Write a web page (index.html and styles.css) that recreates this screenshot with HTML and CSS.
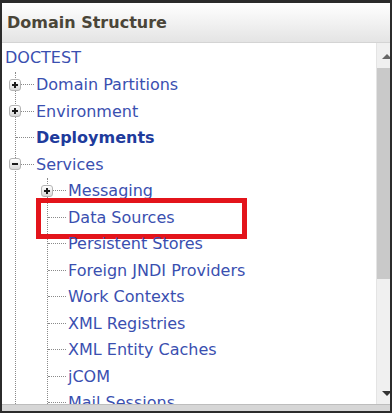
FILE: index.html
```html
<!DOCTYPE html>
<html lang="en">
<head>
  <meta charset="UTF-8" />
  <title>Domain Structure</title>
  <link rel="stylesheet" href="styles.css">
</head>
<body>

  <div class="panel">
    <div class="panel-header">Domain Structure</div>

    <div class="panel-body">
      <div class="tree">
        <div class="root">DOCTEST</div>
        <ul class="branch">
          <li>
            <div class="node"><span class="toggle plus"></span><span class="twig short"></span><a>Domain Partitions</a></div>
          </li>
          <li>
            <div class="node"><span class="toggle plus"></span><span class="twig short"></span><a>Environment</a></div>
          </li>
          <li>
            <div class="node"><span class="twig"></span><a class="strong">Deployments</a></div>
          </li>
          <li>
            <div class="node"><span class="toggle minus"></span><span class="twig short"></span><a>Services</a></div>
            <ul class="branch sub">
              <li>
                <div class="node"><span class="toggle plus"></span><span class="twig short"></span><a>Messaging</a></div>
              </li>
              <li>
                <div class="node marked"><span class="twig"></span><a>Data Sources</a></div>
              </li>
              <li><div class="node"><span class="twig"></span><a>Persistent Stores</a></div></li>
              <li><div class="node"><span class="twig"></span><a>Foreign JNDI Providers</a></div></li>
              <li><div class="node"><span class="twig"></span><a>Work Contexts</a></div></li>
              <li><div class="node"><span class="twig"></span><a>XML Registries</a></div></li>
              <li><div class="node"><span class="twig"></span><a>XML Entity Caches</a></div></li>
              <li><div class="node"><span class="twig"></span><a>jCOM</a></div></li>
              <li><div class="node"><span class="twig"></span><a>Mail Sessions</a></div></li>
            </ul>
          </li>
        </ul>
      </div>

      <div class="scrollbar">
        <div class="arrow up"></div>
        <div class="thumb"></div>
        <div class="track"></div>
        <div class="arrow down"></div>
      </div>
    </div>

    <div class="hbar"></div>
  </div>

</body>
</html>
```

FILE: styles.css
```css
body {
  margin: 0;
  background: #fff;
  font-family: 'DejaVu Sans', Tahoma, sans-serif;
}

.panel {
  width: 388px;
  height: 408px;
  border: 2px solid #2b2b2b;
  border-top-width: 3px;
  display: flex;
  flex-direction: column;
  overflow: hidden;
}

.panel-header {
  height: 39px;
  line-height: 39px;
  padding-left: 5px;
  font-size: 16px;
  font-weight: bold;
  color: #4a4538;
  background: linear-gradient(to bottom, #ffffff, #e4e4e4);
  border-bottom: 1px solid #d4d4d4;
  flex-shrink: 0;
}

.panel-body {
  flex: 1;
  display: flex;
  min-height: 0;
}

.tree {
  flex: 1;
  overflow: hidden;
  padding-top: 2px;
  font-size: 16px;
  color: #3a4fb0;
}

.root {
  height: 26.5px;
  line-height: 26.5px;
  padding-left: 3px;
}

.tree ul {
  list-style: none;
  margin: 0;
  padding: 0;
}

.tree .branch {
  margin-left: 13px;
  border-left: 1px dotted #8a8a8a;
}

.tree .branch.sub {
  margin-left: 31px;
}

.node {
  height: 26.5px;
  display: flex;
  align-items: center;
  position: relative;
}

.twig {
  width: 18px;
  flex-shrink: 0;
  border-top: 1px dotted #8a8a8a;
  margin-right: 2px;
}

.twig.short {
  width: 13px;
}

.toggle {
  width: 10px;
  height: 10px;
  flex-shrink: 0;
  margin-left: -7px;
  border: 1px solid #b4b4b4;
  border-radius: 3px;
  background: linear-gradient(to bottom, #ffffff, #d8d8d8);
  position: relative;
}

.toggle::before,
.plus::after {
  content: "";
  position: absolute;
  background: #1a1a1a;
}

.toggle::before {
  left: 2px;
  right: 2px;
  top: 4px;
  height: 2px;
}

.plus::after {
  top: 2px;
  bottom: 2px;
  left: 4px;
  width: 2px;
}

.tree a {
  white-space: nowrap;
}

.tree a.strong {
  font-weight: bold;
  color: #1e3b9c;
}

/* red highlight around the selected entry */
.marked::after {
  content: "";
  position: absolute;
  left: -12px;
  top: -6px;
  width: 201px;
  height: 31px;
  border: 5px solid #e3141b;
}

.scrollbar {
  width: 13px;
  background: #f0f0f0;
  border-left: 1px solid #e4e4e4;
  display: flex;
  flex-direction: column;
  align-items: flex-end;
}

.arrow {
  width: 0;
  height: 0;
  border-left: 5px solid transparent;
  border-right: 5px solid transparent;
  margin: 11px -2px 9px 0;
}

.arrow.up {
  border-bottom: 5px solid #666;
}

.arrow.down {
  border-top: 5px solid #333;
  margin: 5px -2px 8px 0;
}

.thumb {
  width: 13px;
  height: 211px;
  background: #c9c9c9;
}

.track {
  flex: 1;
}

.hbar {
  height: 6px;
  background: #d6d6d6;
  border-top: 1px solid #bdbdbd;
  flex-shrink: 0;
}
```
